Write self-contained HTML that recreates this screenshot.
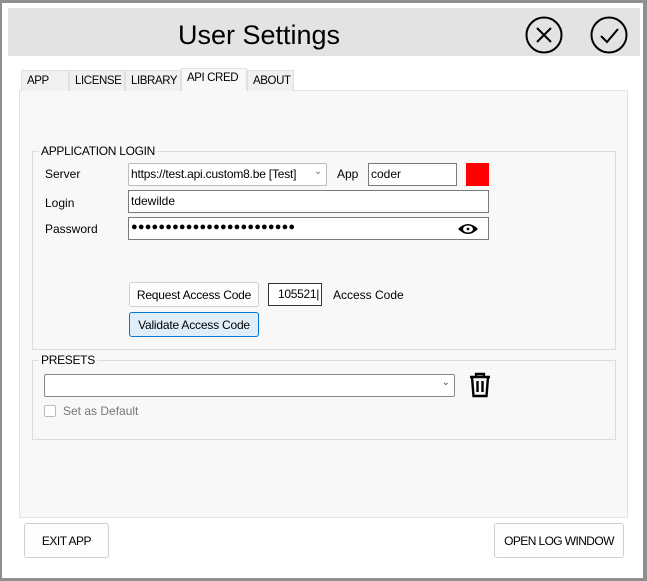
<!DOCTYPE html>
<html><head><style>
*{box-sizing:border-box;margin:0;padding:0}
body{width:647px;height:581px;background:#8f8f8f;font-family:"Liberation Sans",sans-serif;font-size:12px;color:#000;position:relative;overflow:hidden}
.win{position:absolute;left:2px;top:3px;width:641px;height:575px;background:#fff}
.abs{position:absolute}
.hdr{left:6px;top:5px;width:632px;height:48px;background:#e3e3e3}
.title{left:0;top:12px;width:502px;text-align:center;font-size:27px}
.tab{position:absolute;top:67px;height:21px;border:1px solid #e0e0e0;border-bottom:none;background:#f0f0f0;padding:4px 0 0 5px;font-size:11.5px;letter-spacing:-0.4px;white-space:nowrap;overflow:hidden}
.panel{left:17px;top:87px;width:609px;height:428px;background:#f8f8f8;border:1px solid #e3e3e3}
.grp{position:absolute;border:1px solid #dcdcdc}
.lg{position:absolute;top:-8px;left:6px;background:#f8f8f8;padding:0 2px;font-size:12px;letter-spacing:-0.3px}
.inp{position:absolute;background:#fff;border:1px solid #7a7a7a;height:23px;padding:3px 2px;font-size:12px}
.btn{position:absolute;border:1px solid #d0d0d0;border-radius:3px;background:#fdfdfd;text-align:center;font-size:12px;letter-spacing:-0.2px}
</style></head><body>
<div class="win">
<div class="abs hdr"><div class="abs title">User Settings</div>
<svg class="abs" style="left:516px;top:8px" width="40" height="40" viewBox="0 0 40 40"><circle cx="20" cy="19" r="17.5" fill="none" stroke="#000" stroke-width="2"/><path d="M13 12L27 26M27 12L13 26" stroke="#000" stroke-width="2"/></svg>
<svg class="abs" style="left:581px;top:8px" width="40" height="40" viewBox="0 0 40 40"><circle cx="20" cy="19" r="17.5" fill="none" stroke="#000" stroke-width="2"/><path d="M12 20L18 26L29 13" fill="none" stroke="#000" stroke-width="2"/></svg>
</div>
<div class="abs panel"></div>
<div class="tab" style="left:19px;width:48px">APP</div>
<div class="tab" style="left:67px;width:56px">LICENSE</div>
<div class="tab" style="left:123px;width:56px">LIBRARY</div>
<div class="tab" style="left:179px;width:66px;top:65px;height:23px;background:#f8f8f8;padding-top:3px">API CRED</div>
<div class="tab" style="left:245px;width:47px">ABOUT</div>

<div class="grp" style="left:30px;top:148px;width:584px;height:199px"><div class="lg">APPLICATION LOGIN</div></div>
<div class="abs" style="left:43px;top:164px">Server</div>
<div class="inp" style="left:126px;top:160px;width:199px;border-color:#bbb;border-radius:2px;letter-spacing:-0.2px">https://test.api.custom8.be [Test]<span style="position:absolute;right:4px;top:2px;color:#777;font-size:10px">&#8964;</span></div>
<div class="abs" style="left:335px;top:164px">App</div>
<div class="inp" style="left:366px;top:160px;width:89px">coder</div>
<div class="abs" style="left:464px;top:160px;width:23px;height:23px;background:#f00"></div>
<div class="abs" style="left:43px;top:193px">Login</div>
<div class="inp" style="left:126px;top:187px;width:361px;height:23px">tdewilde</div>
<div class="abs" style="left:43px;top:219px">Password</div>
<div class="inp" style="left:126px;top:214px;width:361px;height:23px;font-size:11px;letter-spacing:0.2px;padding-top:3px">●●●●●●●●●●●●●●●●●●●●●●●●</div>
<svg class="abs" style="left:455px;top:220px" width="22" height="12" viewBox="0 0 22 12"><path d="M1 6Q11 -4 21 6Q11 16 1 6Z" fill="#000"/><ellipse cx="11" cy="6" rx="5" ry="3.5" fill="#fff"/><circle cx="11" cy="6" r="1.4" fill="#000"/></svg>

<div class="btn" style="left:127px;top:279px;width:130px;height:25px;padding-top:5px">Request Access Code</div>
<div class="inp" style="left:266px;top:280px;width:54px;height:23px;padding-left:9px;border-color:#333;letter-spacing:-0.3px">105521|</div>
<div class="abs" style="left:331px;top:285px">Access Code</div>
<div class="btn" style="left:127px;top:309px;width:130px;height:25px;padding-top:5px;background:#e0eef9;border-color:#0078d4">Validate Access Code</div>

<div class="grp" style="left:30px;top:357px;width:584px;height:80px"><div class="lg">PRESETS</div></div>
<div class="inp" style="left:42px;top:371px;width:411px;height:23px;border-color:#888;border-radius:2px"><span style="position:absolute;right:4px;top:2px;color:#555;font-size:10px">&#8964;</span></div>
<svg class="abs" style="left:466px;top:369px" width="24" height="26" viewBox="0 0 24 26"><path d="M2 5H22M8 5V2H16V5M4 5L5.5 24H18.5L20 5M9.5 9V20M14.5 9V20" fill="none" stroke="#000" stroke-width="2.4"/></svg>
<div class="abs" style="left:42px;top:402px;width:12px;height:12px;border:1px solid #bbb;border-radius:2px;background:#fff"></div>
<div class="abs" style="left:61px;top:401px;color:#777">Set as Default</div>

<div class="btn" style="left:22px;top:520px;width:85px;height:35px;padding-top:10px;letter-spacing:-0.5px">EXIT APP</div>
<div class="btn" style="left:492px;top:520px;width:130px;height:35px;padding-top:10px;letter-spacing:-0.6px">OPEN LOG WINDOW</div>
</div>
</body></html>
